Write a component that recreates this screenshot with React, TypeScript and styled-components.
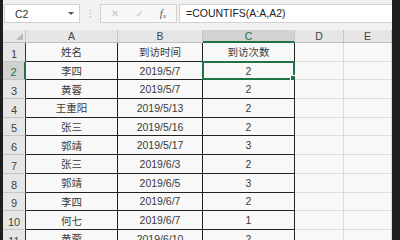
import React from "react";
import styled, { createGlobalStyle, css } from "styled-components";

const GREEN = "#217346";

const Global = createGlobalStyle`
  html, body { margin: 0; padding: 0; background: #1e1e1e; }
  body { font-family: "Liberation Sans", "Noto Sans CJK SC", sans-serif; }
`;

const rows: [string, string, string][] = [
  ["李四", "2019/5/7", "2"],
  ["黄蓉", "2019/5/7", "2"],
  ["王重阳", "2019/5/13", "2"],
  ["张三", "2019/5/16", "2"],
  ["郭靖", "2019/5/17", "3"],
  ["张三", "2019/6/3", "2"],
  ["郭靖", "2019/6/5", "3"],
  ["李四", "2019/6/7", "2"],
  ["何七", "2019/6/7", "1"],
  ["黄蓉", "2019/6/10", "2"],
];

const columns = ["A", "B", "C", "D", "E"];

export default function App() {
  return (
    <>
      <Global />
      <Window>
        <Edge $w={3} />
        <Main>
          <FormulaBar>
            <NameBox>
              <span>C2</span>
              <Caret />
            </NameBox>
            <Grip>
              <i />
              <i />
              <i />
            </Grip>
            <ButtonBox>
              <ToolGlyph>✕</ToolGlyph>
              <ToolGlyph>✓</ToolGlyph>
              <Fx>
                f<sub>x</sub>
              </Fx>
            </ButtonBox>
            <FormulaInput>=COUNTIFS(A:A,A2)</FormulaInput>
          </FormulaBar>

          <Sheet>
            <Corner>
              <Triangle />
            </Corner>
            {columns.map((c) => (
              <ColHead key={c} $active={c === "C"}>
                {c}
              </ColHead>
            ))}

            <RowHead>1</RowHead>
            <Cell $table>姓名</Cell>
            <Cell $table>到访时间</Cell>
            <Cell $table>到访次数</Cell>
            <Cell />
            <Cell />

            {rows.map((r, i) => {
              const n = i + 2;
              return (
                <React.Fragment key={n}>
                  <RowHead $active={n === 2}>{n}</RowHead>
                  <Cell $table>{r[0]}</Cell>
                  <Cell $table>{r[1]}</Cell>
                  <Cell $table>
                    {r[2]}
                    {n === 2 && (
                      <Selection>
                        <Handle />
                      </Selection>
                    )}
                  </Cell>
                  <Cell />
                  <Cell />
                </React.Fragment>
              );
            })}
          </Sheet>
        </Main>
        <Edge $w={8} />
      </Window>
    </>
  );
}

const Window = styled.div`
  width: 400px;
  height: 240px;
  display: flex;
  overflow: hidden;
  background: #f8f8f8;
`;

const Edge = styled.div<{ $w: number }>`
  width: ${(p) => p.$w}px;
  flex-shrink: 0;
  background: #1e1e1e;
`;

const Main = styled.div`
  flex: 1;
  display: flex;
  flex-direction: column;
  min-width: 0;
`;

const FormulaBar = styled.div`
  height: 30px;
  flex-shrink: 0;
  display: flex;
  align-items: flex-start;
  padding: 4px 0 0 1px;
  box-sizing: border-box;
  background: #f1f1f1;
`;

const boxStyle = css`
  height: 19px;
  box-sizing: border-box;
  background: #fff;
  border: 1px solid #d2d2d2;
`;

const NameBox = styled.div`
  ${boxStyle};
  width: 76px;
  display: flex;
  align-items: center;
  justify-content: space-between;
  padding: 0 5px 0 10px;
  font-size: 10.5px;
  color: #333;
`;

const Caret = styled.span`
  width: 0;
  height: 0;
  border-left: 3px solid transparent;
  border-right: 3px solid transparent;
  border-top: 3px solid #555;
`;

const Grip = styled.div`
  width: 20px;
  height: 19px;
  display: flex;
  flex-direction: column;
  align-items: center;
  justify-content: center;
  gap: 2px;
  i {
    width: 1px;
    height: 1px;
    background: #a8a8a8;
  }
`;

const ButtonBox = styled.div`
  ${boxStyle};
  width: 77px;
  display: flex;
  align-items: center;
  justify-content: space-around;
  padding: 0 2px;
  background: #f7f7f7;
`;

const ToolGlyph = styled.span`
  font-family: "DejaVu Sans", sans-serif;
  font-size: 10px;
  color: #c2c2c2;
`;

const Fx = styled.span`
  font-family: "Liberation Serif", serif;
  font-style: italic;
  font-size: 11px;
  color: #555;
  sub {
    font-size: 7px;
    vertical-align: -1px;
  }
`;

const FormulaInput = styled.div`
  ${boxStyle};
  flex: 1;
  margin-left: 2px;
  border-right: none;
  padding-left: 6px;
  font-size: 10.5px;
  line-height: 17px;
  color: #222;
`;

const Sheet = styled.div`
  display: grid;
  grid-template-columns: 23px 92px 85px 92px 49px 48px;
  grid-template-rows: 13px;
  grid-auto-rows: 18.7px;
  flex: 1;
  font-size: 10.5px;
  color: #3a3a3a;
`;

const headBase = css`
  display: flex;
  align-items: center;
  justify-content: center;
  box-sizing: border-box;
  background: #e6e6e6;
  color: #444;
  font-size: 10.5px;
`;

const Corner = styled.div`
  ${headBase};
  position: relative;
  border-right: 1px solid #c6c6c6;
  border-bottom: 1px solid #bdbdbd;
`;

const Triangle = styled.span`
  position: absolute;
  right: 2px;
  bottom: 2px;
  width: 0;
  height: 0;
  border-left: 7px solid transparent;
  border-bottom: 7px solid #b8b8b8;
`;

const ColHead = styled.div<{ $active?: boolean }>`
  ${headBase};
  border-right: 1px solid #c6c6c6;
  border-bottom: 1px solid #bdbdbd;
  ${(p) =>
    p.$active &&
    css`
      background: #d2d2d2;
      color: ${GREEN};
      border-bottom: 2px solid ${GREEN};
    `}
`;

const RowHead = styled.div<{ $active?: boolean }>`
  ${headBase};
  align-items: flex-end;
  padding-bottom: 1px;
  font-size: 11px;
  border-bottom: 1px solid #c6c6c6;
  border-right: 1px solid #333;
  ${(p) =>
    p.$active &&
    css`
      background: #d2d2d2;
      color: ${GREEN};
      border-right: 2px solid ${GREEN};
    `}
`;

const Cell = styled.div<{ $table?: boolean }>`
  position: relative;
  display: flex;
  align-items: center;
  justify-content: center;
  box-sizing: border-box;
  white-space: nowrap;
  background: #f8f8f8;
  border-right: 1px solid ${(p) => (p.$table ? "#222" : "#dcdcdc")};
  border-bottom: 1px solid ${(p) => (p.$table ? "#222" : "#dcdcdc")};
`;

const Selection = styled.div`
  position: absolute;
  inset: -1px -1px -1px -1px;
  border: 2px solid ${GREEN};
  pointer-events: none;
`;

const Handle = styled.span`
  position: absolute;
  right: -4px;
  bottom: -4px;
  width: 5px;
  height: 5px;
  background: ${GREEN};
  border: 1px solid #fff;
`;
